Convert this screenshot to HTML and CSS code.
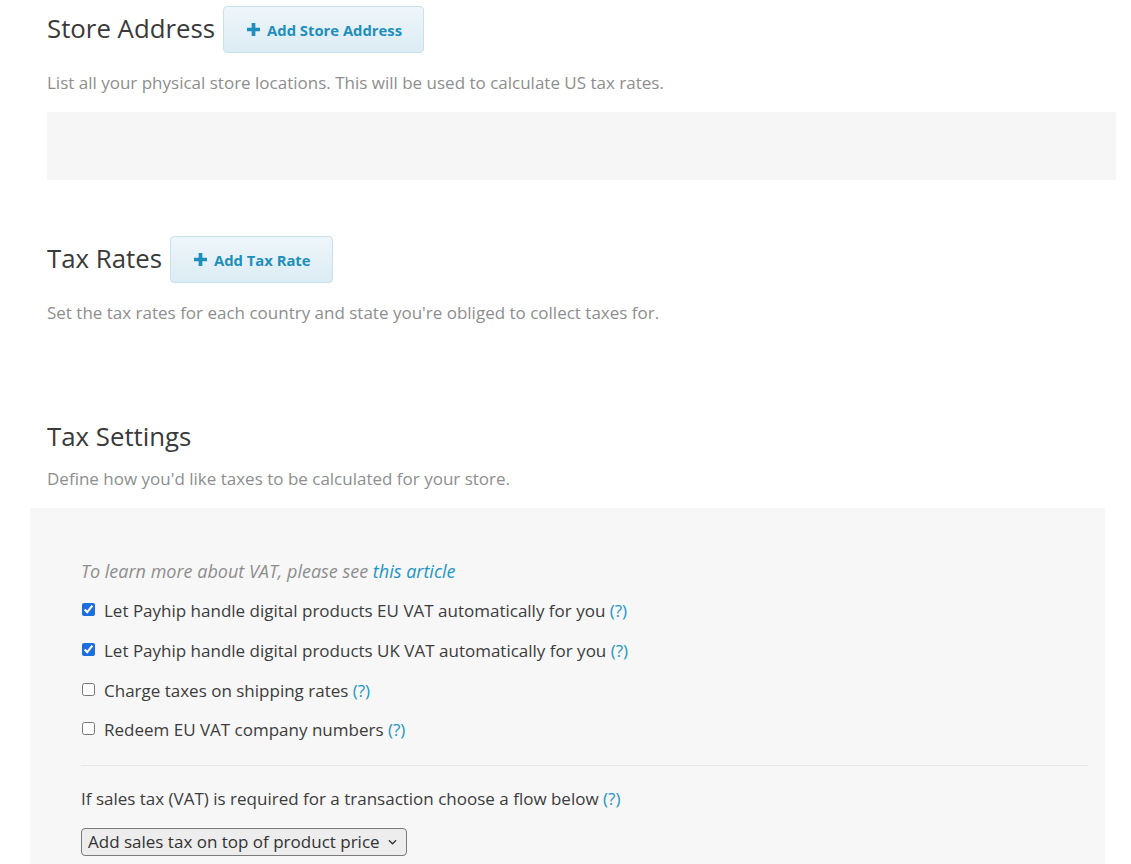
FILE: index.html
```html
<!DOCTYPE html>
<html>
<head>
<meta charset="utf-8">
<link rel="stylesheet" href="styles.css">
</head>
<body>
<div class="page">
  <div class="section-head first">
    <h2 class="title">Store Address</h2>
    <button class="add-btn"><svg class="plus" viewBox="0 0 14 14" width="13" height="13"><path d="M5 0h4v5h5v4H9v5H5V9H0V5h5z" fill="#1e8fba"/></svg>Add Store Address</button>
  </div>
  <p class="desc">List all your physical store locations. This will be used to calculate US tax rates.</p>
  <div class="empty-box"></div>

  <div class="section-head second">
    <h2 class="title">Tax Rates</h2>
    <button class="add-btn"><svg class="plus" viewBox="0 0 14 14" width="13" height="13"><path d="M5 0h4v5h5v4H9v5H5V9H0V5h5z" fill="#1e8fba"/></svg>Add Tax Rate</button>
  </div>
  <p class="desc">Set the tax rates for each country and state you're obliged to collect taxes for.</p>

  <h2 class="title plain">Tax Settings</h2>
  <p class="desc tight">Define how you'd like taxes to be calculated for your store.</p>

  <div class="settings-box">
    <p class="note">To learn more about VAT, please see <a href="#" class="link">this article</a></p>
    <label class="check-row"><input type="checkbox" checked><span>Let Payhip handle digital products EU VAT automatically for you <a href="#" class="help">(?)</a></span></label>
    <label class="check-row"><input type="checkbox" checked><span>Let Payhip handle digital products UK VAT automatically for you <a href="#" class="help">(?)</a></span></label>
    <label class="check-row"><input type="checkbox"><span>Charge taxes on shipping rates <a href="#" class="help">(?)</a></span></label>
    <label class="check-row"><input type="checkbox"><span>Redeem EU VAT company numbers <a href="#" class="help">(?)</a></span></label>
    <hr class="divider">
    <p class="flow-label">If sales tax (VAT) is required for a transaction choose a flow below <a href="#" class="help">(?)</a></p>
    <div class="select-wrap">
      <select class="flow-select">
        <option>Add sales tax on top of product price</option>
      </select>
      <svg class="chev" viewBox="0 0 10 6" width="9" height="6"><path d="M1 1l4 4 4-4" fill="none" stroke="#333" stroke-width="1.4"/></svg>
    </div>
  </div>
</div>
</body>
</html>
```
FILE: styles.css
```css
* { box-sizing: border-box; }
html, body { margin: 0; padding: 0; background: #fff; }
body { font-family: "Open Sans", "Liberation Sans", sans-serif; color: #3a3a3a; }
.page { padding-left: 30px; width: 1116px; }

.section-head {
  display: flex;
  align-items: center;
  gap: 8px;
  height: 47px;
  margin-left: 17px;
}
.section-head.first { margin-top: 6px; }
.section-head.second { margin-top: 56px; }
.section-head .title { padding-bottom: 3px; }

.title {
  margin: 0;
  font-size: 25.8px;
  font-weight: 400;
  color: #3a3a3a;
  line-height: 34px;
}
.title.plain { margin: 94px 0 0 17px; }

.add-btn {
  display: flex;
  align-items: center;
  gap: 7px;
  height: 47px;
  padding: 0 21px 0 23px;
  border: 1px solid #c9e1ec;
  border-radius: 4px;
  background: linear-gradient(#eef6fa, #dcecf4);
  color: #1e8fba;
  font-family: "Open Sans", "Liberation Sans", sans-serif;
  font-size: 14.8px;
  font-weight: 700;
}
.plus { display: block; }

.desc {
  margin: 18px 0 0 17px;
  font-size: 17px;
  line-height: 24px;
  color: #8e8e8e;
}
.desc.tight { margin-top: 14px; }

.empty-box {
  margin: 17px 0 0 17px;
  height: 68px;
  background: #f6f6f6;
}

.settings-box {
  margin-top: 17px;
  width: 1075px;
  background: #f7f7f7;
  padding: 51px 17px 8px 51px;
  display: flex;
  flex-direction: column;
}
.note {
  margin: 0;
  font-size: 18px;
  line-height: 24px;
  font-style: italic;
  color: #8e8e8e;
}
.link, .help { color: #2196c4; text-decoration: none; }

.check-row {
  display: flex;
  align-items: center;
  height: 24px;
  margin-top: 15.7px;
  font-size: 17px;
  color: #3c3c3c;
}
.check-row input {
  width: 13px;
  height: 13px;
  margin: 0 9px 2px 1px;
  accent-color: #1a6ee0;
}

.divider {
  margin: 23px 0 0;
  border: 0;
  border-top: 1px solid #e8e8e8;
  width: 100%;
}
.flow-label {
  margin: 21px 0 0;
  font-size: 17px;
  line-height: 24px;
  color: #3c3c3c;
}
.select-wrap {
  position: relative;
  margin-top: 17px;
  width: 326px;
  height: 28px;
}
.flow-select {
  appearance: none;
  -webkit-appearance: none;
  width: 100%;
  height: 100%;
  font-family: "Open Sans", "Liberation Sans", sans-serif;
  font-size: 17px;
  color: #333;
  background: #ededed;
  border: 1px solid #7a7a7a;
  border-radius: 4px;
  padding: 0 24px 0 6px;
}
.chev {
  position: absolute;
  right: 10px;
  top: 11px;
  pointer-events: none;
}
```
